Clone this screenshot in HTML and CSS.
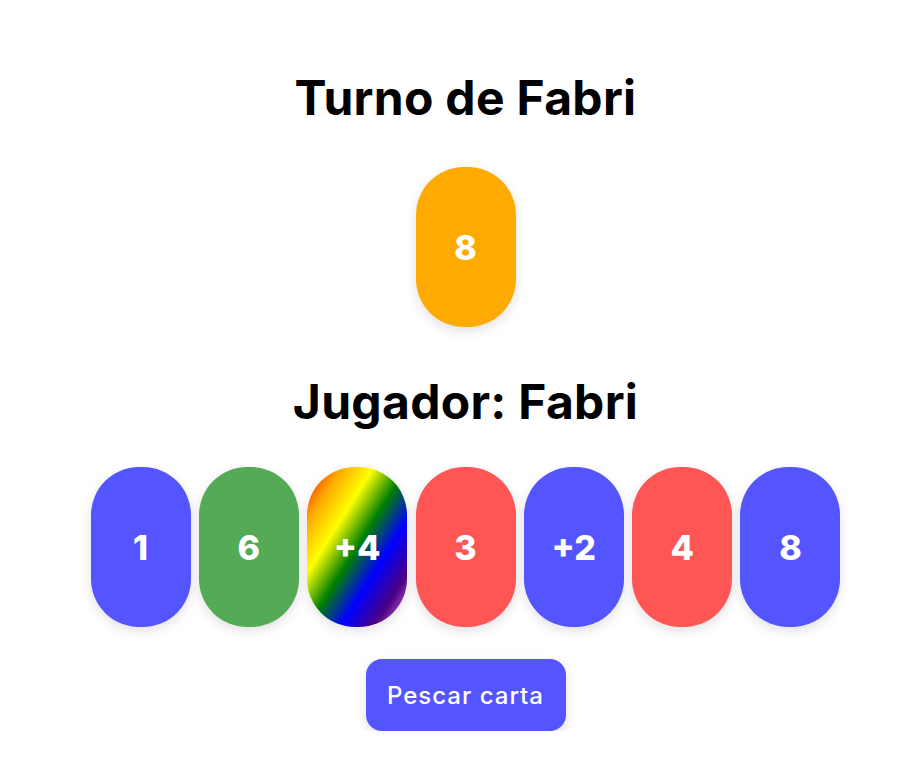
FILE: index.html
```html
<!DOCTYPE html>
<html lang="es">
<head>
<meta charset="utf-8">
<title>UNO</title>
<link rel="stylesheet" href="styles.css">
</head>
<body>
<main class="game">
  <h1 class="title">Turno de Fabri</h1>
  <div class="pile">
    <div class="card card-orange">8</div>
  </div>
  <h2 class="title title-player">Jugador: Fabri</h2>
  <div class="hand">
    <div class="card card-blue">1</div>
    <div class="card card-green">6</div>
    <div class="card card-wild">+4</div>
    <div class="card card-red">3</div>
    <div class="card card-blue">+2</div>
    <div class="card card-red">4</div>
    <div class="card card-blue">8</div>
  </div>
  <button class="draw-btn" type="button">Pescar carta</button>
</main>
</body>
</html>
```

FILE: styles.css
```css
html, body {
  margin: 0;
  padding: 0;
  background: #ffffff;
}

body {
  font-family: "Inter", "DejaVu Sans", sans-serif;
  color: #000000;
}

.game {
  display: flex;
  flex-direction: column;
  align-items: center;
  padding: 70px 0 0 11px;
}

.title {
  margin: 0;
  font-size: 48px;
  line-height: 56px;
  font-weight: 700;
  letter-spacing: 0.3px;
}

.pile {
  margin-top: 41px;
}

.title-player {
  margin-top: 47px;
}

.hand {
  display: flex;
  gap: 8.33px;
  margin-top: 37px;
}

.card {
  width: 100px;
  height: 160px;
  border-radius: 48px;
  display: flex;
  align-items: center;
  justify-content: center;
  color: #ffffff;
  font-size: 34px;
  font-weight: 800;
  box-shadow: 0 4px 12px rgba(0, 0, 0, 0.12);
}

.card-orange { background: #ffaa00; }
.card-blue { background: #5555ff; }
.card-green { background: #55aa55; }
.card-red { background: #ff5555; }
.card-wild {
  background: linear-gradient(to bottom right, red, orange, yellow, green, blue, indigo, violet);
}

.draw-btn {
  margin-top: 32px;
  width: 200px;
  height: 72px;
  border: none;
  border-radius: 16px;
  background: #5555ff;
  color: #ffffff;
  font-family: inherit;
  font-size: 24px;
  font-weight: 500;
  letter-spacing: 1px;
  box-shadow: 0 4px 12px rgba(0, 0, 0, 0.12);
  cursor: pointer;
}
```
